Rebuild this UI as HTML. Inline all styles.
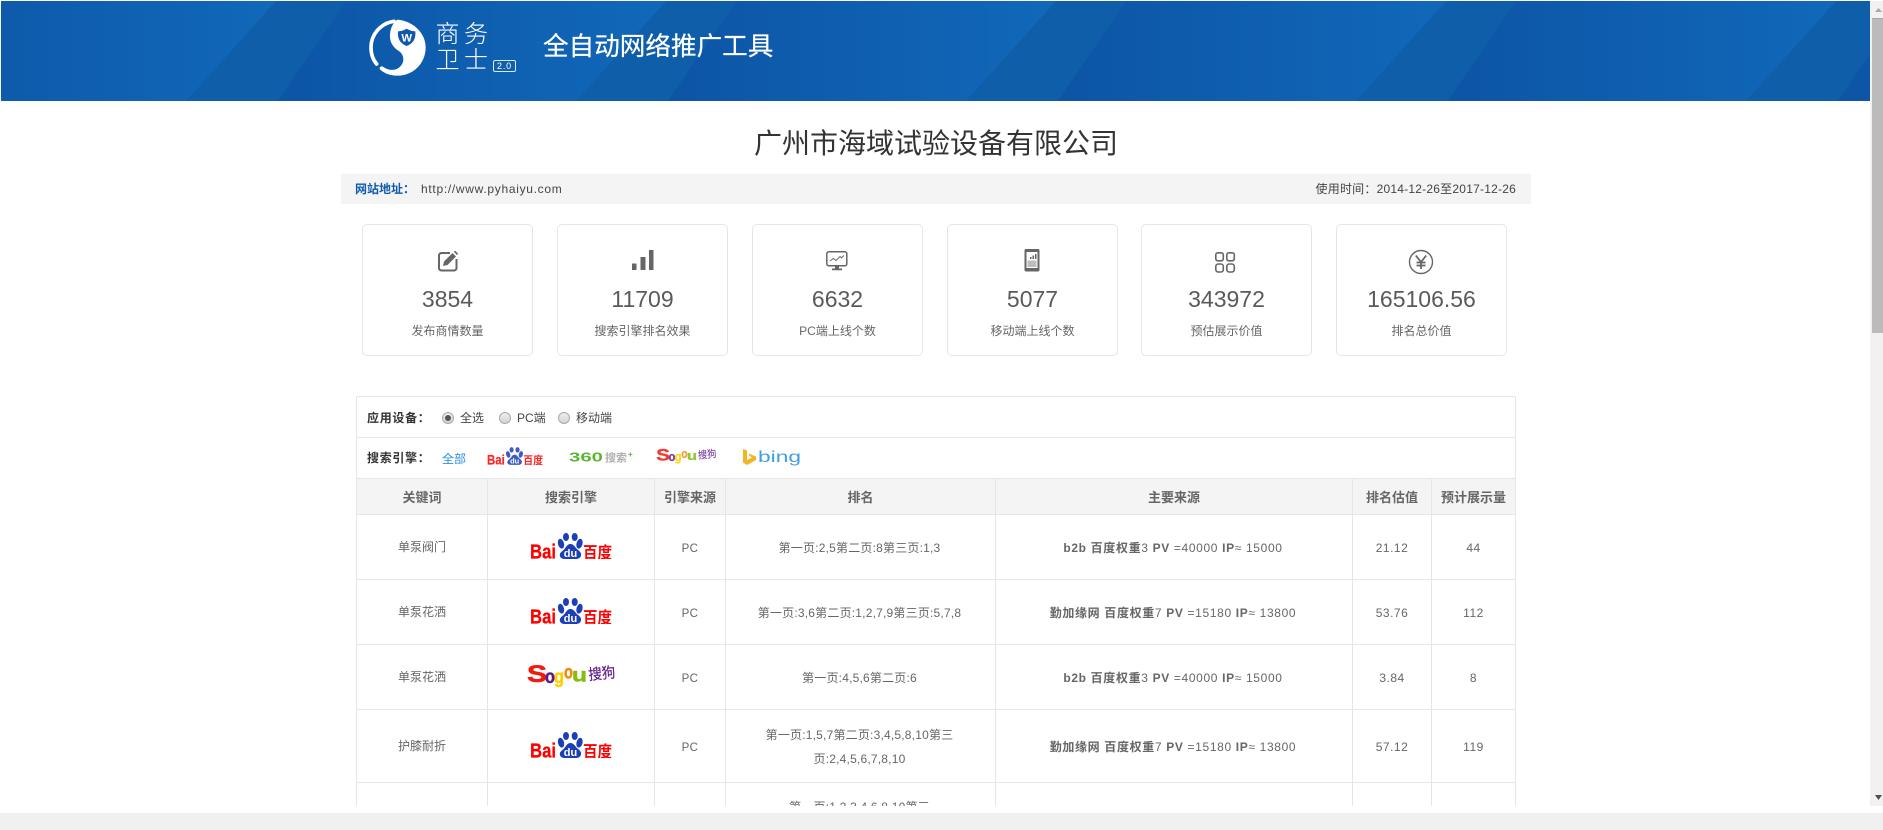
<!DOCTYPE html>
<html lang="zh-CN"><head><meta charset="utf-8"><title>商务卫士</title>
<style>
*{box-sizing:border-box}
html,body{margin:0;padding:0;width:1883px;height:830px;overflow:hidden;background:#fff}
body{position:relative;font-family:"Liberation Sans","Noto Sans CJK SC",sans-serif;font-size:12px;color:#666}
.abs{position:absolute}
.hdr{position:absolute;left:1px;top:1px;width:1869px;height:100px;overflow:hidden}
.lt{position:absolute;color:#fff;font-size:24px;line-height:24px;font-weight:300;white-space:nowrap}
.slogan{position:absolute;left:543px;top:31px;font-size:25.6px;line-height:32px;color:#fff;white-space:nowrap;-webkit-text-stroke:.2px #fff}
h1{position:absolute;left:341px;width:1190px;top:125px;margin:0;text-align:center;font-size:28px;line-height:38px;font-weight:400;color:#333}
.info{position:absolute;left:341px;top:174px;width:1190px;height:30px;background:#f4f4f4;line-height:30px;color:#444}
.info b{position:absolute;left:14px;color:#0d5cab;font-weight:700;white-space:nowrap}
.info .u{position:absolute;left:80px;letter-spacing:.7px;white-space:nowrap}
.info .t{position:absolute;right:15px;letter-spacing:.22px;white-space:nowrap}
.card{position:absolute;top:224px;width:171px;height:132px;border:1px solid #e6e6e6;border-radius:5px;text-align:center}
.card svg{position:absolute}
.card .n{position:absolute;left:0;right:0;top:60px;font-size:23px;line-height:28px;color:#5a5a5a}
.card .l{position:absolute;left:0;right:0;top:97px;line-height:18px;color:#666}
.box{position:absolute;left:356px;top:396px;width:1160px;height:410px;overflow:hidden;border:1px solid #e6e6e6;border-bottom:0}
.fr{position:absolute;left:0;width:1158px;height:41px;border-bottom:1px solid #e6e6e6}
.fl{position:absolute;white-space:nowrap;line-height:18px;color:#444}
.lb{position:absolute;left:10px;top:11px;font-weight:700;color:#333;letter-spacing:.7px;white-space:nowrap;line-height:18px}
.rd{position:absolute;width:12px;height:12px;border-radius:50%;border:1px solid #a9a9a9;background:linear-gradient(#eee,#d4d4d4)}
.rd i{position:absolute;left:2px;top:2px;width:6px;height:6px;border-radius:50%;background:#555}
table{position:absolute;left:0;top:82px;border-collapse:separate;border-spacing:0;table-layout:fixed;width:1159px}
th,td{padding:0;border-right:1px solid #e6e6e6;border-bottom:1px solid #e6e6e6;text-align:center;vertical-align:middle;font-weight:400}
th{height:36px;background:#f4f4f4;font-size:13px;font-weight:700;color:#666}
td{height:65px;color:#666;line-height:24px}
td svg{display:block;margin:0 auto;position:relative;top:-1px}
td b{font-weight:700}
.pc{font-size:11.5px;letter-spacing:.4px;padding-top:3px}
.rk{letter-spacing:.2px;padding:2px 2px 0 0}
.src{letter-spacing:.65px;padding:2px 2px 0 0}
.v{letter-spacing:.5px;padding-top:2px}
.last{height:23px;overflow:hidden}
.last div{height:22px;overflow:hidden}
.sb{position:absolute;left:1870px;top:1px;width:13px;height:805px;background:#f1f1f1}
.th{position:absolute;left:2px;top:17px;width:11px;height:315px;background:#bbb;border-top:1px solid #a9a9a9}
.bot{position:absolute;left:0;top:813px;width:1883px;height:17px;background:#f0f0f0}
</style></head><body>

<div class="hdr">
<svg width="1869" height="100" viewBox="1 1 1869 100" style="display:block">
<defs><linearGradient id="bg" x1="0" x2="1" y1="0" y2="0"><stop offset="0" stop-color="#0d55a6"/><stop offset=".12" stop-color="#0d57a8"/><stop offset="1" stop-color="#1168b9"/></linearGradient></defs>
<rect x="0" y="0" width="1883" height="102" fill="#0f5ea9"/>
<polygon fill="url(#bg)" points="-43,0 277,0 185,102 -113,102"/>
<polygon fill="url(#bg)" points="347,0 667,0 575,102 277,102"/>
<polygon fill="url(#bg)" points="737,0 1057,0 965,102 667,102"/>
<polygon fill="url(#bg)" points="1127,0 1447,0 1355,102 1057,102"/>
<polygon fill="url(#bg)" points="1517,0 1837,0 1745,102 1447,102"/>
<polygon fill="url(#bg)" points="1907,0 2227,0 2135,102 1837,102"/>
</svg>
</div>

<svg class="abs" style="left:360px;top:10px" width="170" height="70" viewBox="0 0 510 210">
<path fill="#fff" d="M112 29C160 33 197 70 197 112C197 160 160 197 112 197C90 197 72 190 60 178C56 172 64 166 70 171C85 182 105 183 118 172C135 158 133 135 118 124C100 112 88 98 90 72C92 52 100 38 112 29Z"/>
<path fill="none" stroke="#fff" stroke-width="11" stroke-linecap="round" d="M102 34C60 40 33 75 33 112C33 130 38 148 50 162"/>
<path fill="#0f5aa8" d="M140 56C150 62 158 64 166 64C168 86 160 100 140 108C120 100 112 86 114 64C122 64 130 62 140 56Z"/>
<text x="140" y="95" text-anchor="middle" font-family="Liberation Sans" font-weight="700" font-size="34" fill="#fff">W</text>
</svg>
<span class="lt" style="left:435.500px;top:22.500px">商</span>
<span class="lt" style="left:464px;top:22.500px">务</span>
<span class="lt" style="left:435.500px;top:49px">卫</span>
<span class="lt" style="left:464px;top:49px">士</span>
<div class="abs" style="left:493px;top:60px;width:23px;height:12px;border:1px solid #dfe9f5;border-radius:2px;color:#fff;font-size:9px;line-height:10px;text-align:center;letter-spacing:.8px">2.0</div>
<div class="slogan">全自动网络推广工具</div>

<h1>广州市海域试验设备有限公司</h1>

<div class="info"><b>网站地址：</b><span class="u">http://www.pyhaiyu.com</span><span class="t">使用时间：2014-12-26至2017-12-26</span></div>

<div class="card" style="left:362px">
<svg style="left:74px;top:25px" width="22" height="22" viewBox="0 0 22 22"><path d="M13 3H4.500A2.500 2.500 0 0 0 2 5.500V18a2.500 2.500 0 0 0 2.500 2.500H17A2.500 2.500 0 0 0 19.500 18V9" fill="none" stroke="#666" stroke-width="2"/><path d="M6 16L7 11.500L15.500 3L19 6.500L10.500 15Z" fill="#666"/><path d="M16.800 1.800L18 .6L21.200 3.800L20 5Z" fill="#666"/></svg>
<div class="n">3854</div><div class="l">发布商情数量</div></div>

<div class="card" style="left:557px">
<svg style="left:74px;top:25px" width="22" height="21" viewBox="0 0 22 21"><rect x="0" y="13.500" width="4.500" height="6.500" fill="#666"/><rect x="8.500" y="7" width="5" height="13" fill="#666"/><rect x="17" y="0" width="4.500" height="20" fill="#666"/></svg>
<div class="n">11709</div><div class="l">搜索引擎排名效果</div></div>

<div class="card" style="left:752px">
<svg style="left:73px;top:26px" width="22" height="20" viewBox="0 0 22 20"><rect x=".8" y=".8" width="20" height="14" rx="2" fill="none" stroke="#666" stroke-width="1.500"/><path d="M4 10L7.500 7.500L10 9.500L14 5.500L15.500 6.800L18 4.500" fill="none" stroke="#666"/><path d="M9 15.500H13V17.500H16V19.200H6V17.500H9Z" fill="#666"/></svg>
<div class="n">6632</div><div class="l">PC端上线个数</div></div>

<div class="card" style="left:947px">
<svg style="left:76px;top:24px" width="16" height="23" viewBox="0 0 16 23"><rect x=".5" y="0" width="15" height="22.500" rx="1.500" fill="#666"/><rect x="2.500" y="3" width="11" height="16" fill="#fff"/><rect x="6" y="8" width="1.500" height="2" fill="#666"/><rect x="8.500" y="6.500" width="1.500" height="3.500" fill="#666"/><rect x="11" y="5" width="1.500" height="5" fill="#666"/><rect x="3.500" y="11.500" width="9" height="6.500" fill="#bdbdbd"/></svg>
<div class="n">5077</div><div class="l">移动端上线个数</div></div>

<div class="card" style="left:1141px">
<svg style="left:73px;top:27px" width="21" height="21" viewBox="0 0 21 21"><rect x=".8" y=".8" width="7.500" height="8" rx="2" fill="none" stroke="#666" stroke-width="1.600"/><rect x="11.800" y=".8" width="7.500" height="8" rx="2" fill="none" stroke="#666" stroke-width="1.600"/><rect x=".8" y="12" width="7.500" height="8" rx="2.500" fill="none" stroke="#666" stroke-width="1.600"/><rect x="11.800" y="12" width="7.500" height="8" rx="2.500" fill="none" stroke="#666" stroke-width="1.600"/></svg>
<div class="n">343972</div><div class="l">预估展示价值</div></div>

<div class="card" style="left:1336px">
<svg style="left:71px;top:24px" width="26" height="26" viewBox="0 0 26 26"><circle cx="13" cy="13" r="11.500" fill="none" stroke="#666" stroke-width="1.400"/><path d="M7.800 6.500L13 13L18.200 6.500M13 13V20M8.500 13.500H17.500M8.500 16.500H17.500" fill="none" stroke="#666" stroke-width="1.800"/></svg>
<div class="n">165106.56</div><div class="l">排名总价值</div></div>

<div class="box">
<div class="fr" style="top:0"><span class="lb" style="top:12px">应用设备：</span>
<span class="rd" style="left:85px;top:15px"><i></i></span><span class="fl" style="left:103px;top:12px">全选</span>
<span class="rd" style="left:142px;top:15px"></span><span class="fl" style="left:160px;top:12px">PC端</span>
<span class="rd" style="left:201px;top:15px"></span><span class="fl" style="left:219px;top:12px">移动端</span>
</div>
<div class="fr" style="top:41px"><span class="lb">搜索引擎：</span>
<span class="fl" style="left:85px;top:12px;color:#2a8fdc">全部</span>

<svg class="abs" style="left:130px;top:9px;opacity:.85" width="56" height="18" viewBox="0 0 82 26">
<text x="0" y="25.500" font-family="Liberation Sans" font-weight="700" font-size="20" fill="#f00" stroke="#f00" stroke-width=".3" textLength="26" lengthAdjust="spacingAndGlyphs">Bai</text>
<ellipse cx="36" cy="4" rx="3" ry="4" fill="#1c3fb8"/><ellipse cx="44.700" cy="4" rx="3" ry="4" fill="#1c3fb8"/><ellipse cx="31" cy="10.700" rx="3" ry="5" fill="#1c3fb8" transform="rotate(-15 31 10.700)"/><ellipse cx="49.500" cy="10.700" rx="3" ry="5" fill="#1c3fb8" transform="rotate(15 49.500 10.700)"/>
<path fill="#1c3fb8" d="M40.500 11C44 11 45 14.500 47.500 16.500C50 18.500 51.500 20 51 22.500C50.500 25 48 26 46 26H35C32 26 29.800 24.800 29.800 22C29.800 19.500 32 18.500 34 16.500C36 14.500 37 11 40.500 11Z"/>
<text x="40.500" y="24" text-anchor="middle" font-family="Liberation Sans" font-weight="700" font-size="11" fill="#fff">du</text>
<text x="53" y="25" font-family="Noto Sans CJK SC" font-weight="700" font-size="16" fill="#f00" textLength="29" lengthAdjust="spacingAndGlyphs">百度</text></svg>

<svg class="abs" style="left:212px;top:13px" width="65" height="12" viewBox="0 0 65 12">
<text x="0" y="10.500" font-family="Liberation Sans" font-weight="700" font-size="13" fill="#5cb531" textLength="34" lengthAdjust="spacingAndGlyphs">360</text>
<text x="36" y="10.500" font-family="Noto Sans CJK SC" font-weight="700" font-size="11" fill="#b0b0b0" textLength="22" lengthAdjust="spacingAndGlyphs">搜索</text>
<text x="59" y="6" font-family="Liberation Sans" font-weight="700" font-size="8" fill="#5cb531">+</text></svg>

<svg class="abs" style="left:299px;top:10px;opacity:.85" width="61" height="17" viewBox="0 0 89 25">
<text x="0" y="18" font-family="Liberation Sans" font-weight="700" font-size="24" fill="#f01a10" stroke="#f01a10" stroke-width=".6" textLength="20" lengthAdjust="spacingAndGlyphs">S</text>
<text x="18" y="19" font-family="Liberation Sans" font-weight="700" font-size="19" fill="#5f1a85" stroke="#5f1a85" stroke-width=".5" textLength="10" lengthAdjust="spacingAndGlyphs">o</text>
<text x="27" y="19" font-family="Liberation Sans" font-weight="700" font-size="19" fill="#ffcf00" stroke="#ffcf00" stroke-width=".5" textLength="10" lengthAdjust="spacingAndGlyphs">g</text>
<text x="37" y="14.500" font-family="Liberation Sans" font-weight="700" font-size="19" fill="#f28a10" stroke="#f28a10" stroke-width=".5" textLength="9" lengthAdjust="spacingAndGlyphs">o</text>
<text x="45" y="17.500" font-family="Liberation Sans" font-weight="700" font-size="19" fill="#85bd0f" stroke="#85bd0f" stroke-width=".5" textLength="15" lengthAdjust="spacingAndGlyphs">u</text>
<text x="62" y="16" font-family="Noto Sans CJK SC" font-size="15" fill="#5f1a85" stroke="#5f1a85" stroke-width=".2" textLength="27" lengthAdjust="spacingAndGlyphs" transform="rotate(-6 62 16)">搜狗</text></svg>

<svg class="abs" style="left:386px;top:10px" width="60" height="20" viewBox="0 0 60 20">
<path fill="#f5b324" d="M0 1L4 2.500V12L9 9.500L6.500 8L5.500 5.500L13 8.500V12L4 17L0 14.500Z"/>
<text x="15" y="14" font-family="Liberation Sans" font-size="16" fill="#3f9ee8" textLength="43" lengthAdjust="spacingAndGlyphs">bing</text></svg>
</div>

<table>
<colgroup><col style="width:131px"><col style="width:167px"><col style="width:71px"><col style="width:270px"><col style="width:357px"><col style="width:79px"><col style="width:84px"></colgroup>
<tr><th>关键词</th><th>搜索引擎</th><th>引擎来源</th><th>排名</th><th>主要来源</th><th>排名估值</th><th>预计展示量</th></tr>

<tr><td>单泵阀门</td><td>
<svg width="82" height="26" viewBox="0 0 82 26"><text x="0" y="25.500" font-family="Liberation Sans" font-weight="700" font-size="20" fill="#f00" stroke="#f00" stroke-width=".3" textLength="26" lengthAdjust="spacingAndGlyphs">Bai</text><ellipse cx="36" cy="4" rx="3" ry="4" fill="#1c3fb8"/><ellipse cx="44.700" cy="4" rx="3" ry="4" fill="#1c3fb8"/><ellipse cx="31" cy="10.700" rx="3" ry="5" fill="#1c3fb8" transform="rotate(-15 31 10.700)"/><ellipse cx="49.500" cy="10.700" rx="3" ry="5" fill="#1c3fb8" transform="rotate(15 49.500 10.700)"/><path fill="#1c3fb8" d="M40.500 11C44 11 45 14.500 47.500 16.500C50 18.500 51.500 20 51 22.500C50.500 25 48 26 46 26H35C32 26 29.800 24.800 29.800 22C29.800 19.500 32 18.500 34 16.500C36 14.500 37 11 40.500 11Z"/><text x="40.500" y="24" text-anchor="middle" font-family="Liberation Sans" font-weight="700" font-size="11" fill="#fff">du</text><text x="53" y="25" font-family="Noto Sans CJK SC" font-weight="700" font-size="16" fill="#f00" textLength="29" lengthAdjust="spacingAndGlyphs">百度</text></svg>
</td><td class="pc">PC</td><td class="rk">第一页:2,5第二页:8第三页:1,3</td><td class="src"><b>b2b 百度权重</b>3 <b>PV</b> =40000 <b>IP</b>≈ 15000</td><td class="v">21.12</td><td class="v">44</td></tr>

<tr><td>单泵花洒</td><td>
<svg width="82" height="26" viewBox="0 0 82 26"><text x="0" y="25.500" font-family="Liberation Sans" font-weight="700" font-size="20" fill="#f00" stroke="#f00" stroke-width=".3" textLength="26" lengthAdjust="spacingAndGlyphs">Bai</text><ellipse cx="36" cy="4" rx="3" ry="4" fill="#1c3fb8"/><ellipse cx="44.700" cy="4" rx="3" ry="4" fill="#1c3fb8"/><ellipse cx="31" cy="10.700" rx="3" ry="5" fill="#1c3fb8" transform="rotate(-15 31 10.700)"/><ellipse cx="49.500" cy="10.700" rx="3" ry="5" fill="#1c3fb8" transform="rotate(15 49.500 10.700)"/><path fill="#1c3fb8" d="M40.500 11C44 11 45 14.500 47.500 16.500C50 18.500 51.500 20 51 22.500C50.500 25 48 26 46 26H35C32 26 29.800 24.800 29.800 22C29.800 19.500 32 18.500 34 16.500C36 14.500 37 11 40.500 11Z"/><text x="40.500" y="24" text-anchor="middle" font-family="Liberation Sans" font-weight="700" font-size="11" fill="#fff">du</text><text x="53" y="25" font-family="Noto Sans CJK SC" font-weight="700" font-size="16" fill="#f00" textLength="29" lengthAdjust="spacingAndGlyphs">百度</text></svg>
</td><td class="pc">PC</td><td class="rk">第一页:3,6第二页:1,2,7,9第三页:5,7,8</td><td class="src"><b>勤加缘网 百度权重</b>7 <b>PV</b> =15180 <b>IP</b>≈ 13800</td><td class="v">53.76</td><td class="v">112</td></tr>

<tr><td>单泵花洒</td><td>
<svg width="89" height="25" viewBox="0 0 89 25"><text x="0" y="18" font-family="Liberation Sans" font-weight="700" font-size="24" fill="#f01a10" stroke="#f01a10" stroke-width=".6" textLength="20" lengthAdjust="spacingAndGlyphs">S</text><text x="18" y="19" font-family="Liberation Sans" font-weight="700" font-size="19" fill="#5f1a85" stroke="#5f1a85" stroke-width=".5" textLength="10" lengthAdjust="spacingAndGlyphs">o</text><text x="27" y="19" font-family="Liberation Sans" font-weight="700" font-size="19" fill="#ffcf00" stroke="#ffcf00" stroke-width=".5" textLength="10" lengthAdjust="spacingAndGlyphs">g</text><text x="37" y="14.500" font-family="Liberation Sans" font-weight="700" font-size="19" fill="#f28a10" stroke="#f28a10" stroke-width=".5" textLength="9" lengthAdjust="spacingAndGlyphs">o</text><text x="45" y="17.500" font-family="Liberation Sans" font-weight="700" font-size="19" fill="#85bd0f" stroke="#85bd0f" stroke-width=".5" textLength="15" lengthAdjust="spacingAndGlyphs">u</text><text x="62" y="16" font-family="Noto Sans CJK SC" font-size="15" fill="#5f1a85" stroke="#5f1a85" stroke-width=".2" textLength="27" lengthAdjust="spacingAndGlyphs" transform="rotate(-6 62 16)">搜狗</text></svg>
</td><td class="pc">PC</td><td class="rk">第一页:4,5,6第二页:6</td><td class="src"><b>b2b 百度权重</b>3 <b>PV</b> =40000 <b>IP</b>≈ 15000</td><td class="v">3.84</td><td class="v">8</td></tr>

<tr><td style="height:73px">护膝耐折</td><td>
<svg width="82" height="26" viewBox="0 0 82 26"><text x="0" y="25.500" font-family="Liberation Sans" font-weight="700" font-size="20" fill="#f00" stroke="#f00" stroke-width=".3" textLength="26" lengthAdjust="spacingAndGlyphs">Bai</text><ellipse cx="36" cy="4" rx="3" ry="4" fill="#1c3fb8"/><ellipse cx="44.700" cy="4" rx="3" ry="4" fill="#1c3fb8"/><ellipse cx="31" cy="10.700" rx="3" ry="5" fill="#1c3fb8" transform="rotate(-15 31 10.700)"/><ellipse cx="49.500" cy="10.700" rx="3" ry="5" fill="#1c3fb8" transform="rotate(15 49.500 10.700)"/><path fill="#1c3fb8" d="M40.500 11C44 11 45 14.500 47.500 16.500C50 18.500 51.500 20 51 22.500C50.500 25 48 26 46 26H35C32 26 29.800 24.800 29.800 22C29.800 19.500 32 18.500 34 16.500C36 14.500 37 11 40.500 11Z"/><text x="40.500" y="24" text-anchor="middle" font-family="Liberation Sans" font-weight="700" font-size="11" fill="#fff">du</text><text x="53" y="25" font-family="Noto Sans CJK SC" font-weight="700" font-size="16" fill="#f00" textLength="29" lengthAdjust="spacingAndGlyphs">百度</text></svg>
</td><td class="pc">PC</td><td class="rk">第一页:1,5,7第二页:3,4,5,8,10第三<br>页:2,4,5,6,7,8,10</td><td class="src"><b>勤加缘网 百度权重</b>7 <b>PV</b> =15180 <b>IP</b>≈ 13800</td><td class="v">57.12</td><td class="v">119</td></tr>

<tr><td class="last" style="border-bottom:0"></td><td class="last" style="border-bottom:0"></td><td class="last" style="border-bottom:0"></td><td class="last" style="vertical-align:top;border-bottom:0;letter-spacing:.2px"><div style="padding-top:12px;padding-right:2px;height:23px">第一页:1,2,3,4,6,8,10第三</div></td><td class="last" style="border-bottom:0"></td><td class="last" style="border-bottom:0"></td><td class="last" style="border-bottom:0"></td></tr>
</table>
</div>

<div class="sb"><div class="th"></div>
<svg class="abs" style="left:5px;top:7px" width="7" height="4"><path d="M3.500 0L7 4H0Z" fill="#a8a8a8"/></svg>
<svg class="abs" style="left:5px;top:794px" width="7" height="5"><path d="M0 0H7L3.500 5Z" fill="#505050"/></svg>
</div>
<div class="bot"></div>
</body></html>
